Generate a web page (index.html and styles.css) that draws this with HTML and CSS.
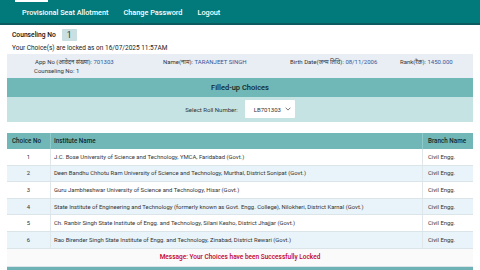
FILE: index.html
```html
<!DOCTYPE html>
<html>
<head>
<meta charset="utf-8">
<link rel="stylesheet" href="styles.css">
</head>
<body>
<header class="topbar">
  <div class="tab"></div>
  <nav class="nav">
    <a>Provisional Seat Allotment</a>
    <a>Change Password</a>
    <a>Logout</a>
  </nav>
</header>
<main class="page">
  <div class="counsel"><span class="lbl">Counseling No</span><span class="badge">1</span></div>
  <div class="locked">Your Choice(s) are locked as on 16/07/2025 11:57AM</div>
  <div class="info">
    <div class="cell">App No (आवेदन संख्या): <span class="val">701303</span></div>
    <div class="cell">Name(नाम): <span class="val">TARANJEET SINGH</span></div>
    <div class="cell">Birth Date(जन्म तिथि): <span class="val">08/11/2006</span></div>
    <div class="cell">Rank(रैंक): <span class="val">1450.000</span></div>
    <div class="cell c2">Counseling No: 1</div>
  </div>
  <div class="fc-head">Filled-up Choices</div>
  <div class="fc-select">
    <span class="sel-lbl">Select Roll Number:</span>
    <div class="select"><span>LB701303</span>
      <svg width="6" height="4" viewBox="0 0 6 4"><path d="M0.6 0.7 L3 3.1 L5.4 0.7" fill="none" stroke="#555" stroke-width="0.8"/></svg>
    </div>
  </div>
  <table class="choices">
    <thead>
      <tr><th class="cno">Choice No</th><th>Institute Name</th><th class="br">Branch Name</th></tr>
    </thead>
    <tbody>
      <tr><td class="num">1</td><td>J.C. Bose University of Science and Technology, YMCA, Faridabad (Govt.)</td><td>Civil Engg.</td></tr>
      <tr class="alt"><td class="num">2</td><td>Deen Bandhu Chhotu Ram University of Science and Technology, Murthal, District Sonipat (Govt.)</td><td>Civil Engg.</td></tr>
      <tr><td class="num">3</td><td>Guru Jambheshwar University of Science and Technology, Hisar (Govt.)</td><td>Civil Engg.</td></tr>
      <tr class="alt"><td class="num">4</td><td>State Institute of Engineering and Technology (formerly known as Govt. Engg. College), Nilokheri, District Karnal (Govt.)</td><td>Civil Engg.</td></tr>
      <tr><td class="num">5</td><td>Ch. Ranbir Singh State Institute of Engg. and Technology, Silani Kesho, District Jhajjar (Govt.)</td><td>Civil Engg.</td></tr>
      <tr class="alt"><td class="num">6</td><td>Rao Birender Singh State Institute of Engg. and Technology, Zinabad, District Rewari (Govt.)</td><td>Civil Engg.</td></tr>
      <tr class="msg"><td colspan="3">Message: Your Choices have been Successfully Locked</td></tr>
    </tbody>
  </table>
  <div class="foot"></div>
</main>
</body>
</html>
```
FILE: styles.css
```css
html, body { margin: 0; padding: 0; }
body {
  font-family: Roboto, "Noto Sans", "Noto Sans Devanagari", "Liberation Sans", sans-serif;
  background: #ffffff;
  color: #222;
  width: 480px;
  height: 270px;
  overflow: hidden;
}
.topbar {
  background: #027a7b;
  border-bottom: 2px solid #0c5c5f;
  height: 23px;
  display: flex;
  flex-direction: column;
}
.tab { width: 33px; height: 2px; margin-left: 15px; background: #ffffff; }
.nav {
  height: 21px;
  display: flex;
  align-items: center;
  gap: 15px;
  padding-left: 22px;
}
.nav a { color: #ffffff; font-size: 7.3px; font-weight: 500; }
.page { padding: 0 7px; }
.counsel {
  margin-top: 4px;
  height: 12px;
  display: flex;
  align-items: center;
  padding-left: 5px;
  gap: 6px;
}
.lbl { font-size: 6.7px; font-weight: 500; color: #111; }
.badge {
  width: 15px; height: 12px;
  background: #c9dfe2;
  border-radius: 1px;
  font-size: 8.5px;
  color: #2b3b3b;
  display: flex; align-items: center; justify-content: center;
}
.locked {
  padding-left: 5px;
  font-size: 6.5px;
  line-height: 9px;
  margin-top: 2.5px;
  color: #222;
}
.info {
  margin-top: 1px;
  background: #e8eef3;
  height: 24px;
  box-sizing: border-box;
  padding: 3px 0 3px 28px;
  display: grid;
  grid-template-columns: 128px 127px 110px 1fr;
  grid-auto-rows: 9px;
  font-size: 6px;
  line-height: 9px;
  color: #333;
}
.info .c2 { grid-column: 1; margin-left: -1px; }
.val { color: #33559e; }
.fc-head {
  background: #70b7b8;
  height: 19px;
  display: flex; align-items: center; justify-content: center;
  font-size: 7.5px; font-weight: 500; color: #10282a;
}
.fc-select {
  background: #c6e3e4;
  height: 25px;
  display: flex; align-items: center; justify-content: center;
  gap: 7px;
  font-size: 6px; color: #333;
}
.select {
  width: 50px; height: 18px;
  box-sizing: border-box;
  background: #fff;
  border-radius: 1px;
  display: flex; align-items: center; justify-content: space-between;
  padding: 0 4px 0 9px;
  font-size: 6px; color: #333;
}
table.choices {
  margin-top: 11px;
  width: 466px;
  border-collapse: collapse;
  font-size: 5.9px;
  color: #333;
}
.choices th {
  background: #72b7b8;
  height: 16px;
  padding: 0 0 0 3px;
  text-align: left;
  font-weight: 500;
  font-size: 6.3px;
  color: #102a2b;
  border-left: 1px solid #8ecaca;
}
.choices th:first-child { border-left: none; padding-left: 5px; }
.choices th.cno { width: 38px; }
.choices th.br { width: 45px; padding-left: 5px; }
.choices td {
  height: 16.6px;
  padding: 0 0 0 3px;
  border-bottom: 1px solid #dbe5e9;
  border-left: 1px solid #dfe7ea;
  box-sizing: border-box;
  white-space: nowrap;
}
.choices td:first-child { border-left: none; }
.choices td:last-child { padding-left: 5px; }
.choices td.num { text-align: center; padding: 0; }
.choices tr.alt td { background: #e8f4fa; }
.choices tr.msg td {
  height: 18px;
  text-align: center;
  background: #fafafa;
  color: #c4002b;
  font-size: 6.5px;
  font-weight: 500;
  padding: 0;
}
.foot { height: 6px; background: #6fb2b5; }
```
